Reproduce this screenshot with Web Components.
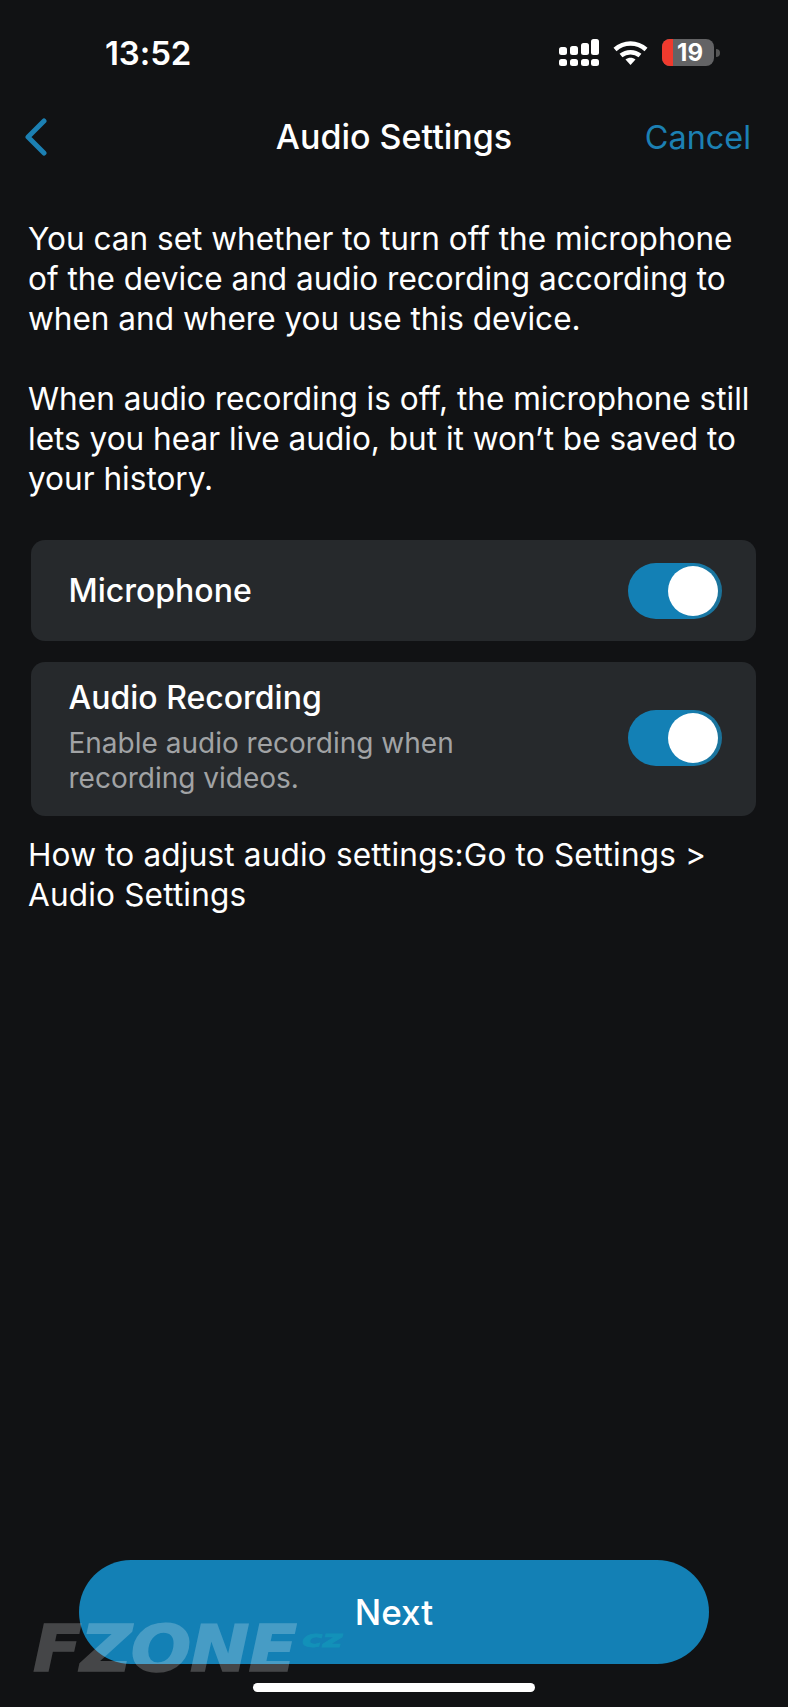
<!DOCTYPE html>
<html><head><meta charset="utf-8">
<style>
html,body{margin:0;padding:0;background:#111214;}
body{width:788px;height:1707px;overflow:hidden;font-family:Inter,"Liberation Sans",sans-serif;color:#fff;display:flex;flex-direction:column;position:relative}
main{flex:1;display:flex;flex-direction:column;padding:49px 28px 0}
</style></head><body>
<template id="t-status"><style>
:host{display:flex;height:104px;box-sizing:border-box;padding:35px 68px 0 105px;justify-content:space-between;align-items:flex-start}
.time{font-size:33px;font-weight:600;line-height:36px;letter-spacing:-.1px}
.icons{display:flex;gap:14px;padding-top:4px}
svg{display:block}
.batt{position:relative;width:52px;height:27px;border-radius:8px;background:#636365;display:flex;align-items:center;justify-content:flex-end;padding-right:11px;box-sizing:border-box;font-size:24px;font-weight:700;line-height:27px}
.batt i{position:absolute;left:0;top:0;bottom:0;width:11px;background:#f03a2e;border-radius:8px 0 0 8px}
.batt span{position:relative}
.wrap{display:flex;align-items:center;gap:2px}
.nub{width:4px;height:8px;background:#555;border-radius:0 4px 4px 0}
</style><div class="time">13:52</div><div class="icons">
<svg width="40" height="27" viewBox="0 0 40 27"><g fill="#fff">
<rect x="0" y="8" width="8" height="8" rx="2.500"/><rect x="0" y="20" width="8" height="7" rx="2.500"/>
<rect x="11" y="7" width="8" height="9" rx="2.500"/><rect x="11" y="20" width="8" height="7" rx="2.500"/>
<rect x="22" y="4" width="8" height="12" rx="2.500"/><rect x="22" y="20" width="8" height="7" rx="2.500"/>
<rect x="32" y="0" width="8" height="16" rx="2.500"/><rect x="32" y="20" width="8" height="7" rx="2.500"/>
</g></svg>
<svg width="35" height="27" viewBox="0 0 35 27">
<g fill="none" stroke="#fff" stroke-width="4.500"><path d="M2 10.500C11 2.500 24 2.500 33 10.500"/><path d="M8 16.500C13.500 12 21.500 12 27 16.500"/></g>
<path d="M12.500 20.500C15.500 18.300 19.500 18.300 22.500 20.500L17.500 26z" fill="#fff"/></svg>
<div class="wrap"><div class="batt"><i></i><span>19</span></div><div class="nub"></div></div>
</div></template>

<template id="t-nav"><style>
:host{display:grid;grid-template-columns:1fr auto 1fr;align-items:center;height:66px;padding:0 37px}
h1{margin:0;font-size:34px;font-weight:500;line-height:40px}
a{justify-self:end;color:#1c80b3;font-size:32.400px;font-weight:400;line-height:40px;padding-top:1px}
svg{display:block;margin-left:-12px}
</style><svg width="22" height="38" viewBox="0 0 22 38"><path d="M19 3L3 19L19 35" fill="none" stroke="#1c80b3" stroke-width="5" stroke-linecap="round" stroke-linejoin="round"/></svg><h1><slot></slot></h1><a><slot name="end"></slot></a></template>

<template id="t-para"><style>
:host{display:block;font-size:31.550px;line-height:40px;color:#fff}
</style><slot></slot></template>

<template id="t-toggle"><style>
:host{display:flex;flex:none;width:94px;height:56px;box-sizing:border-box;border-radius:28px;background:linear-gradient(90deg,#1380b5 55%,#1c7299);padding:3px 4px;justify-content:flex-end}
i{display:block;width:50px;height:50px;border-radius:50%;background:#fff}
</style><i></i></template>

<template id="t-card"><style>
:host{display:flex;align-items:center;justify-content:space-between;box-sizing:border-box;margin:0 4px 0 3px;background:#26292c;border-radius:14px;padding:0 34px 0 37.500px}
.t{font-size:32px;font-weight:500;line-height:40px}
</style><div><div class="t"><slot name="title"></slot></div><slot name="subtext"></slot></div><slot name="control"></slot></template>

<template id="t-sub"><style>
:host{display:block;font-size:28px;line-height:35px;color:#a1a3a5;width:420px;margin-top:8px;padding-bottom:4px}
</style><slot></slot></template>

<template id="t-btn"><style>
:host{display:flex;align-items:center;justify-content:center;height:104px;margin:0 79px;border-radius:52px;background:#1380b5;font-size:35px;font-weight:500}
</style><slot></slot></template>

<template id="t-home"><style>
:host{display:block;height:9px;width:282px;margin:19px auto 15px;background:#fff;border-radius:5px}
</style></template>

<template id="t-mark"><style>
:host{position:absolute;left:33px;top:1604px;display:flex;align-items:flex-start;font-family:"DejaVu Sans",sans-serif;font-weight:700;font-style:italic;pointer-events:none}
b{display:block;font-size:64px;line-height:90px;letter-spacing:-1px;color:#fff;-webkit-text-stroke:1.500px #fff;opacity:.22;font-weight:700;transform:scaleX(1.11);transform-origin:0 50%}
s{display:block;text-decoration:none;font-size:23px;line-height:30px;font-weight:700;margin:20px 0 0 32px;color:#1296ba;opacity:.8;transform:scaleX(1.5);transform-origin:0 50%;-webkit-text-stroke:.8px #1296ba}
</style><b>FZONE</b><s>cz</s></template>

<status-bar></status-bar>
<nav-bar>Audio Settings<span slot="end">Cancel</span></nav-bar>
<main>
<body-text>You can set whether to turn off the microphone<br>of the device and audio recording according to<br>when and where you use this device.<br><br>When audio recording is off, the microphone still<br>lets you hear live audio, but it won’t be saved to<br>your history.</body-text>
<setting-card style="height:101px;margin-top:41px"><span slot="title">Microphone</span><toggle-switch slot="control"></toggle-switch></setting-card>
<setting-card style="height:154px;margin-top:21px"><span slot="title">Audio Recording</span><sub-text slot="subtext">Enable audio recording when recording videos.</sub-text><toggle-switch slot="control" style="margin-bottom:2px"></toggle-switch></setting-card>
<body-text style="margin-top:19px;letter-spacing:.17px">How to adjust audio settings:Go to Settings &gt;<br>Audio Settings</body-text>
</main>
<primary-button>Next</primary-button>
<home-indicator></home-indicator>
<water-mark></water-mark>
<script>
const reg=(n,id)=>customElements.define(n,class extends HTMLElement{constructor(){super();this.attachShadow({mode:'open'}).appendChild(document.getElementById(id).content.cloneNode(true));}});
reg('status-bar','t-status');reg('nav-bar','t-nav');reg('body-text','t-para');reg('toggle-switch','t-toggle');reg('setting-card','t-card');reg('sub-text','t-sub');reg('primary-button','t-btn');reg('home-indicator','t-home');reg('water-mark','t-mark');
</script>
</body></html>
